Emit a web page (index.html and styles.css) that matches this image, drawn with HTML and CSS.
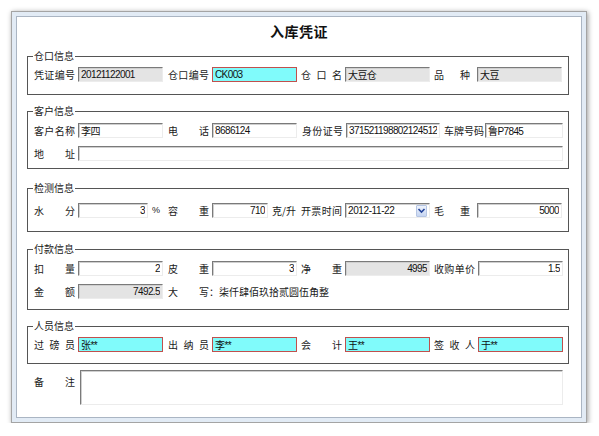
FILE: index.html
```html
<!DOCTYPE html>
<html lang="zh-CN">
<head>
<meta charset="utf-8">
<title>入库凭证</title>
<link rel="stylesheet" href="styles.css">
</head>
<body>
<div class="window">
  <div class="sheet">
    <h1 class="title">入库凭证</h1>

    <section class="group g1">
      <span class="legend">仓口信息</span>
      <div class="row">
        <div class="cell"><label class="lbl">凭证编号</label><input class="in ro" value="20121122001" readonly></div>
        <div class="cell"><label class="lbl">仓口编号</label><input class="in hi" value="CK003"></div>
        <div class="cell"><label class="lbl">仓口名</label><input class="in ro" value="大豆仓" readonly></div>
        <div class="cell"><label class="lbl narrow">品种</label><input class="in ro" value="大豆" readonly></div>
      </div>
    </section>

    <section class="group g2">
      <span class="legend">客户信息</span>
      <div class="row row-client">
        <div class="cell"><label class="lbl">客户名称</label><input class="in" value="李四"></div>
        <div class="cell"><label class="lbl">电话</label><input class="in" value="8686124"></div>
        <div class="cell"><label class="lbl">身份证号</label><input class="in w-id" value="371521198802124512"></div>
        <div class="cell"><label class="lbl tight">车牌号码</label><input class="in w-plate" value="鲁P7845"></div>
      </div>
      <div class="row row-full">
        <div class="cell"><label class="lbl">地址</label><input class="in w-addr" value=""></div>
      </div>
    </section>

    <section class="group g3">
      <span class="legend">检测信息</span>
      <div class="row">
        <div class="cell"><label class="lbl">水分</label><input class="in num w-water" value="3"><span class="unit pct">%</span></div>
        <div class="cell"><label class="lbl">容重</label><input class="in num w-dens" value="710"><span class="unit">克/升</span></div>
        <div class="cell"><label class="lbl">开票时间</label>
          <div class="date"><span class="date-text">2012-11-22</span>
            <span class="drop"><svg width="9" height="9" viewBox="0 0 9 9"><path d="M1.5 3 L4.5 6 L7.5 3" fill="none" stroke="#24449a" stroke-width="1.6"/></svg></span>
          </div>
        </div>
        <div class="cell"><label class="lbl narrow">毛重</label><input class="in num" value="5000"></div>
      </div>
    </section>

    <section class="group g4">
      <span class="legend">付款信息</span>
      <div class="row">
        <div class="cell"><label class="lbl">扣量</label><input class="in num" value="2"></div>
        <div class="cell"><label class="lbl">皮重</label><input class="in num" value="3"></div>
        <div class="cell"><label class="lbl">净重</label><input class="in num ro" value="4995" readonly></div>
        <div class="cell"><label class="lbl">收购单价</label><input class="in num" value="1.5"></div>
      </div>
      <div class="row">
        <div class="cell"><label class="lbl">金额</label><input class="in num ro" value="7492.5" readonly></div>
        <div class="cell cell-span"><label class="lbl">大写</label><span class="amount">：柒仟肆佰玖拾贰圆伍角整</span></div>
      </div>
    </section>

    <section class="group g5">
      <span class="legend">人员信息</span>
      <div class="row">
        <div class="cell"><label class="lbl">过磅员</label><input class="in hi" value="张**"></div>
        <div class="cell"><label class="lbl">出纳员</label><input class="in hi" value="李**"></div>
        <div class="cell"><label class="lbl">会计</label><input class="in hi" value="王**"></div>
        <div class="cell"><label class="lbl">签收人</label><input class="in hi" value="于**"></div>
      </div>
    </section>

    <div class="remark">
      <label class="lbl memo-lbl">备注</label>
      <textarea class="memo"></textarea>
    </div>
  </div>
</div>
</body>
</html>
```

FILE: styles.css
```css
html, body {
  margin: 0;
  padding: 0;
  background: #ffffff;
}

body {
  font-family: "Noto Sans CJK SC", "Noto Sans", sans-serif;
  color: #1a1a1a;
}

.window {
  box-sizing: border-box;
  width: 576px;
  height: 412px;
  margin: 11px 0 0 11px;
  padding: 4px;
  border: 1px solid #a4a4a4;
  background: #e2ebf5;
  box-shadow: 1px 1px 5px rgba(0, 0, 0, 0.4);
}

.sheet {
  box-sizing: border-box;
  height: 100%;
  border: 1px solid #aab5c3;
  background: #ffffff;
  padding: 4px 12px 0 10px;
}

.title {
  margin: 0;
  font: bold 14px/20px "Noto Sans CJK SC", sans-serif;
  text-align: center;
  letter-spacing: 0.5px;
  color: #111;
  padding-left: 2px;
}

.group {
  position: relative;
  border: 1px solid #555555;
  padding-left: 6px;
  padding-right: 4px;
}

.g1 { margin-top: 15px; padding-top: 10px; padding-bottom: 12px; }
.g2 { margin-top: 16px; padding-top: 11px; padding-bottom: 7px; }
.g3 { margin-top: 19px; padding-top: 14px; padding-bottom: 13px; }
.g4 { margin-top: 17px; padding-top: 11px; padding-bottom: 10px; }
.g5 { margin-top: 16px; padding-top: 10px; padding-bottom: 11px; }

.g2 .row + .row,
.g4 .row + .row {
  margin-top: 8px;
}

.legend {
  position: absolute;
  top: -7px;
  left: 5px;
  padding: 0 1px;
  background: #ffffff;
  font-size: 10px;
  line-height: 12px;
  color: #1a1a1a;
}

.row {
  display: grid;
  grid-template-columns: 134px 133px 133px 129px;
  height: 15px;
  align-items: center;
}

.row-client {
  grid-template-columns: 134px 134px 142px 1fr;
}

.row-full {
  grid-template-columns: 1fr;
}

.cell {
  display: flex;
  align-items: center;
  height: 15px;
}

.cell-span {
  grid-column: 2 / 5;
}

.lbl {
  flex: none;
  width: 41px;
  margin-right: 3px;
  font-size: 10px;
  line-height: 15px;
  text-align: justify;
  text-align-last: justify;
  color: #1a1a1a;
}

.lbl.narrow {
  width: 36px;
  margin-right: 7px;
}

.lbl.tight {
  width: 40px;
  margin-right: 1px;
}

.in {
  flex: none;
  box-sizing: border-box;
  width: 85px;
  height: 15px;
  margin: 0;
  padding: 0 2px;
  border: 1px solid;
  border-color: #7a7a7a #ececec #ececec #7a7a7a;
  box-shadow: inset 1px 1px 0 #cfcfcf;
  background: #ffffff;
  font: 10px "Liberation Sans", "Noto Sans CJK SC", sans-serif;
  letter-spacing: -0.6px;
  color: #111;
  outline: none;
}

.in.ro {
  background: #e4e4e4;
}

.in.hi {
  background: #80fbfb;
  border: 1px solid #c0504d;
  box-shadow: none;
}

.in.num {
  text-align: right;
}

.w-id { width: 94px; }
.w-plate { width: 78px; }
.w-addr { width: 485px; }
.w-water { width: 70px; }
.w-dens { width: 56px; }

.unit {
  flex: none;
  padding-left: 4px;
  font-size: 10px;
  line-height: 15px;
  color: #1a1a1a;
}

.unit.pct {
  font-family: "Liberation Sans", sans-serif;
  font-size: 9px;
}

.date {
  flex: none;
  box-sizing: border-box;
  width: 85px;
  height: 15px;
  display: flex;
  align-items: center;
  justify-content: space-between;
  padding: 0 1px 0 2px;
  border: 1px solid;
  border-color: #7a7a7a #ececec #ececec #7a7a7a;
  box-shadow: inset 1px 1px 0 #cfcfcf;
  background: #ffffff;
}

.date-text {
  font: 10px "Liberation Sans", sans-serif;
  letter-spacing: -0.4px;
  color: #111;
}

.drop {
  box-sizing: border-box;
  width: 11px;
  height: 12px;
  margin-right: 1px;
  display: flex;
  align-items: center;
  justify-content: center;
  border: 1px solid #b5c5e3;
  border-radius: 1px;
  background: linear-gradient(#eef3fc, #c6d5f1);
}

.amount {
  font-size: 10px;
  line-height: 15px;
  margin-left: -3px;
  color: #1a1a1a;
}

.remark {
  display: flex;
  align-items: flex-start;
  margin-top: 6px;
  padding-left: 7px;
}

.memo-lbl {
  margin-right: 5px;
  padding-top: 4px;
}

.memo {
  box-sizing: border-box;
  width: 483px;
  height: 35px;
  margin: 0;
  padding: 0;
  resize: none;
  overflow: hidden;
  border: 1px solid;
  border-color: #7a7a7a #ececec #ececec #7a7a7a;
  box-shadow: inset 1px 1px 0 #cfcfcf;
  background: #ffffff;
  outline: none;
}
```
